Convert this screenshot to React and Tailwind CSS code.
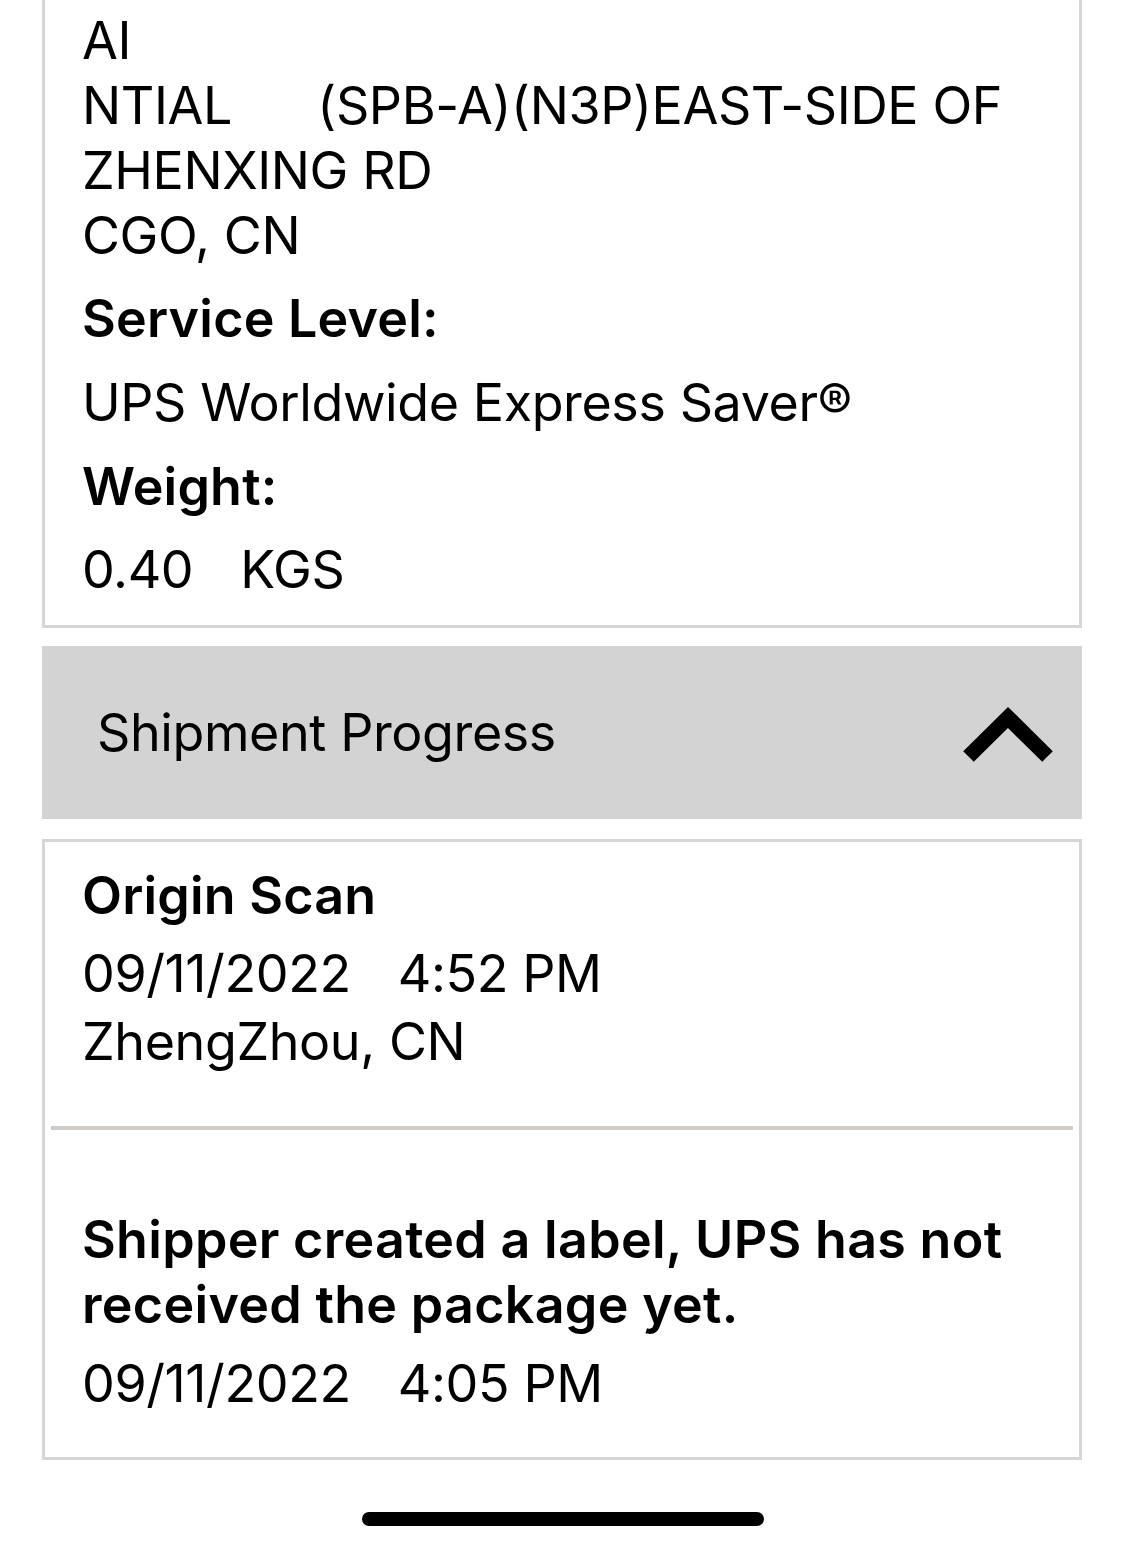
export default function App() {
  return (
    <div className="w-[1122px] h-[1550px] bg-white text-black font-['Inter','Liberation_Sans',sans-serif] text-[52px] leading-[65px] tracking-[-0.4px] overflow-hidden">
      {/* shipment details card (top border scrolled off) */}
      <div className="ml-[42px] w-[1040px] border-x-[3px] border-b-[3px] border-[#d6d6d6] pl-[37px] pt-[8px] pb-[23px]">
        <p>AI</p>
        <p className="whitespace-pre">NTIAL      (SPB-A)(N3P)EAST-SIDE OF</p>
        <p>ZHENXING RD</p>
        <p>CGO, CN</p>
        <p className="mt-[18px] font-semibold tracking-[0.2px]">Service Level:</p>
        <p className="mt-[19px]">UPS Worldwide Express Saver®</p>
        <p className="mt-[19px] font-semibold tracking-[0.2px]">Weight:</p>
        <p className="mt-[18px] flex gap-[47px]">
          <span>0.40</span>
          <span>KGS</span>
        </p>
      </div>

      {/* accordion header */}
      <div className="ml-[42px] mt-[18px] w-[1040px] h-[173px] bg-[#d3d3d3] flex items-center justify-between pl-[55px] pr-[24px]">
        <span>Shipment Progress</span>
        <svg width="100" height="70" viewBox="0 0 100 70" className="mt-[6px]">
          <polyline points="10.5,55.5 50,16.5 89.5,55.5" fill="none" stroke="#000" strokeWidth="15" strokeLinejoin="miter" />
        </svg>
      </div>

      {/* progress card */}
      <div className="ml-[42px] mt-[20px] w-[1040px] border-[3px] border-[#d6d6d6]">
        <div className="pl-[37px] pt-[21px] pb-[52px]">
          <p className="font-semibold tracking-[0.2px]">Origin Scan</p>
          <p className="mt-[13px] flex gap-[47px]">
            <span>09/11/2022</span>
            <span>4:52 PM</span>
          </p>
          <p className="mt-[3px]">ZhengZhou, CN</p>
        </div>
        <div className="mx-[6px] h-[4px] bg-[#d0ccc8]" />
        <div className="pl-[37px] pt-[77px] pb-[41px]">
          <p className="font-semibold tracking-[0.3px]">Shipper created a label, UPS has not</p>
          <p className="font-semibold tracking-[0.3px]">received the package yet.</p>
          <p className="mt-[14px] flex gap-[47px]">
            <span>09/11/2022</span>
            <span>4:05 PM</span>
          </p>
        </div>
      </div>

      {/* home indicator */}
      <div className="mt-[52px] flex justify-center">
        <div className="ml-[4px] w-[402px] h-[14px] rounded-full bg-black" />
      </div>
    </div>
  );
}
